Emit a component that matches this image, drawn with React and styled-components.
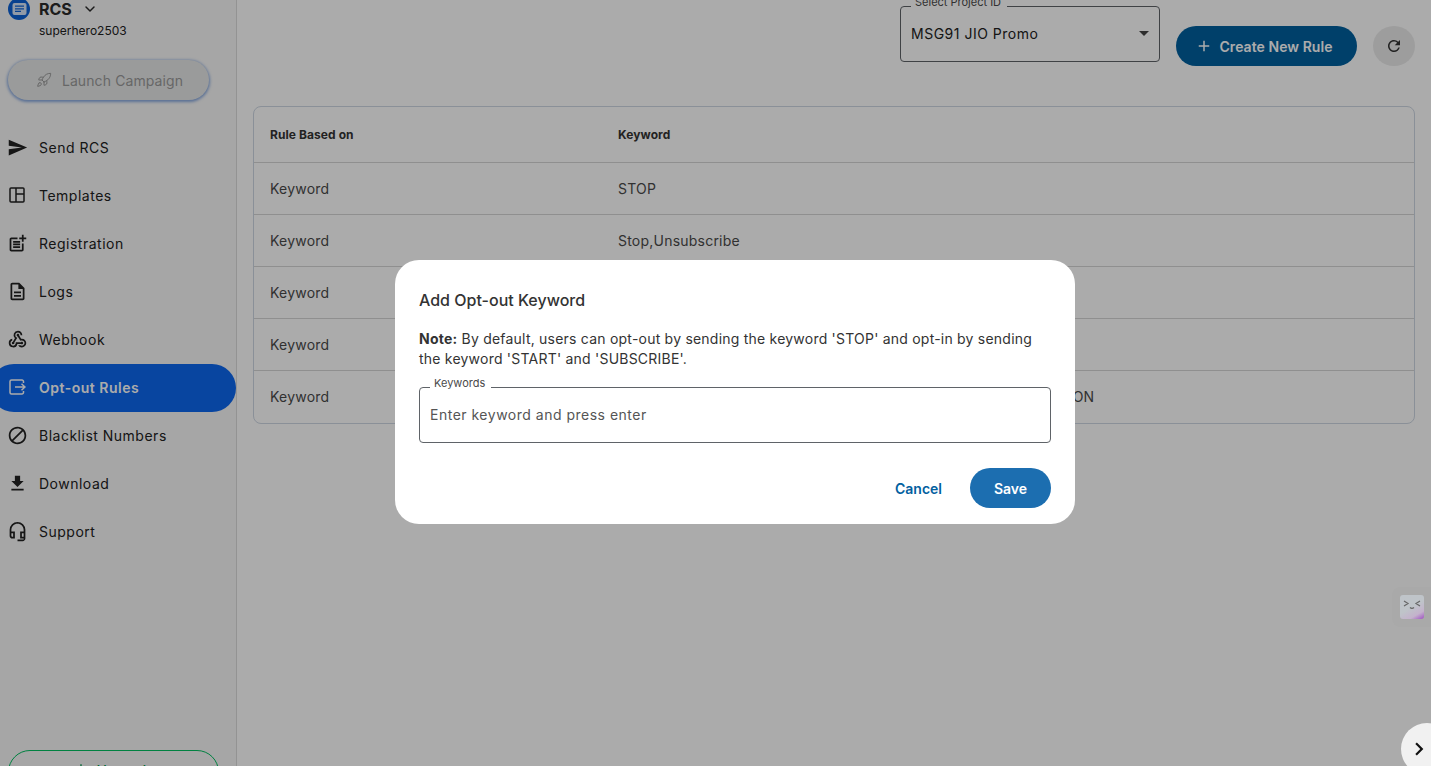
import React from "react";
import styled, { createGlobalStyle } from "styled-components";
import { ChevronDown, Rocket } from "lucide-react";
import {
  MdAdd,
  MdDownload,
  MdKeyboardArrowRight,
  MdOutlineBlock,
  MdOutlineDescription,
  MdOutlineHeadsetMic,
  MdOutlinePostAdd,
  MdOutlineWebhook,
  MdRefresh,
  MdSend,
} from "react-icons/md";

const GlobalStyle = createGlobalStyle`
  html, body { margin: 0; padding: 0; height: 100%; overflow: hidden; }
  body { font-family: Inter, "Noto Sans", sans-serif; background: #fff; color: #212121; }
  * { box-sizing: border-box; }
`;

const Page = styled.div`
  display: flex;
  height: 766px;
  overflow: hidden;
`;

const Sidebar = styled.aside`
  flex: 0 0 237px;
  height: 100%;
  background: #f8f8f8;
  border-right: 1px solid #dcdcdc;
  display: flex;
  flex-direction: column;
  overflow: hidden;
`;

const Brand = styled.div`
  display: grid;
  grid-template-columns: 22px auto 1fr;
  align-items: center;
  column-gap: 9px;
  padding-left: 8px;
  margin-top: -2px;
`;

const BrandLogo = styled.span`
  width: 22px;
  height: 22px;
  border-radius: 50%;
  background: #0c62d6;
  display: flex;
  align-items: center;
  justify-content: center;
`;

const BrandName = styled.div`
  font-size: 16px;
  font-weight: 700;
  line-height: 22px;
  color: #2b2b2b;
  display: flex;
  align-items: center;
  gap: 10px;
`;

const BrandUser = styled.div`
  grid-column: 2 / 4;
  font-size: 12px;
  line-height: 18px;
  color: #212121;
  margin-top: 2px;
`;

const LaunchButton = styled.button`
  margin: 20px 0 0 8px;
  width: 201px;
  height: 40px;
  flex: none;
  border: 0;
  border-radius: 20px;
  background: #e6e8e8;
  box-shadow: 0 1px 3px 1px rgba(40, 100, 200, 0.55);
  color: #9a9a9a;
  font: 400 14px Inter, sans-serif;
  letter-spacing: 0.1px;
  display: flex;
  align-items: center;
  justify-content: center;
  gap: 10px;
  padding: 0 0 0 2px;
`;

const Nav = styled.nav`
  margin-top: 24px;
  display: flex;
  flex-direction: column;
`;

const NavItem = styled.div`
  height: 48px;
  width: ${(p) => (p.$active ? "246px" : "100%")};
  margin-left: ${(p) => (p.$active ? "-10px" : "0")};
  padding: 0 0 2px ${(p) => (p.$active ? "18px" : "8px")};
  border-radius: ${(p) => (p.$active ? "24px" : "0")};
  background: ${(p) => (p.$active ? "#0c67ef" : "transparent")};
  color: ${(p) => (p.$active ? "#fff" : "#212121")};
  font-size: 14px;
  font-weight: ${(p) => (p.$active ? 600 : 400)};
  letter-spacing: 0.5px;
  display: flex;
  align-items: center;
  gap: 13px;
`;

const NavIcon = styled.span`
  width: 18px;
  height: 18px;
  flex: none;
  display: flex;
  align-items: center;
  justify-content: center;
  font-size: 21px;
  svg { flex: none; }
`;

const UpgradeButton = styled.div`
  margin: auto 0 -40px 8px;
  width: 211px;
  height: 56px;
  flex: none;
  border: 1px solid #00c060;
  border-radius: 22px;
  color: #00994d;
  font-size: 14px;
  font-weight: 500;
  display: flex;
  justify-content: center;
  gap: 8px;
  padding-top: 11px;
  svg { margin-top: -1px; }
`;

const Main = styled.main`
  flex: 1;
  min-width: 0;
  padding: 6px 16px 0;
  display: flex;
  flex-direction: column;
`;

const Toolbar = styled.div`
  display: flex;
  justify-content: flex-end;
  gap: 16px;
  height: 60px;
`;

const Outlined = styled.div`
  position: relative;
  border: 1px solid #5f6368;
  border-radius: 4px;
  height: 56px;
  display: flex;
  align-items: center;
  font-size: 14px;
  letter-spacing: 0.5px;
  padding: 0 10px 1px;
`;

const SelectBox = styled(Outlined)`
  width: 260px;
  flex: none;
  justify-content: space-between;
  color: #212121;
`;

const FieldLabel = styled.span`
  position: absolute;
  left: 10px;
  top: -10px;
  padding: 0 6px 0 4px;
  font-size: 11px;
  line-height: 11px;
  letter-spacing: 0;
  background: #fff;
  color: #4a4a4a;
  white-space: nowrap;
`;

const Caret = styled.span`
  width: 0;
  height: 0;
  border-left: 5px solid transparent;
  border-right: 5px solid transparent;
  border-top: 5px solid #444;
`;

const PrimaryButton = styled.button`
  align-self: flex-end;
  height: 40px;
  width: 181px;
  flex: none;
  border: 0;
  border-radius: 20px;
  background: #01609f;
  color: #fff;
  font: 600 14px Inter, sans-serif;
  letter-spacing: 0.05px;
  display: flex;
  align-items: center;
  justify-content: center;
  gap: 6px;
  padding: 0 5px 0 0;
`;

const RoundButton = styled.button`
  align-self: flex-end;
  width: 42px;
  height: 40px;
  flex: none;
  border: 0;
  border-radius: 50%;
  background: #ebebeb;
  color: #333;
  display: flex;
  align-items: center;
  justify-content: center;
  font-size: 18px;
  padding: 0;
`;

const TableWrap = styled.div`
  margin-top: 40px;
  border: 1px solid #ced7e3;
  border-radius: 8px;
  overflow: hidden;
`;

const RulesTable = styled.table`
  width: 100%;
  border-collapse: collapse;
  table-layout: fixed;
`;

const HeadCell = styled.th`
  height: 55px;
  padding: 0 16px;
  text-align: left;
  font-size: 12px;
  font-weight: 700;
  letter-spacing: 0.08px;
  color: #333;
  width: ${(p) => p.$width || "auto"};
`;

const Row = styled.tr`
  border-top: 1px solid #d6d6d6;
`;

const Cell = styled.td`
  height: ${(p) => (p.$last ? "53px" : "52px")};
  padding: 0 16px;
  font-size: 14px;
  letter-spacing: 0.22px;
  color: #4a4a4a;
  white-space: nowrap;
`;

const Overlay = styled.div`
  position: fixed;
  inset: 0;
  background: rgba(0, 0, 0, 0.33);
  display: flex;
  align-items: center;
  justify-content: center;
  padding: 18px 0 0 39px;
`;

const Dialog = styled.div`
  width: 680px;
  height: 264px;
  background: #fff;
  border-radius: 24px;
  padding: 30px 24px 16px;
`;

const DialogTitle = styled.h2`
  margin: 0;
  font-size: 16px;
  font-weight: 500;
  line-height: 20px;
  color: #333;
`;

const Note = styled.p`
  margin: 19px 0 0;
  font-size: 14px;
  line-height: 20px;
  letter-spacing: 0.22px;
  color: #333;
  b { font-weight: 700; }
`;

const KeywordField = styled(Outlined)`
  margin-top: 18px;
  color: #555;
`;

const DialogActions = styled.div`
  margin-top: 25px;
  display: flex;
  justify-content: flex-end;
  align-items: center;
  gap: 28px;
`;

const TextButton = styled.button`
  border: 0;
  background: none;
  padding: 0;
  color: #01609f;
  font: 600 14px Inter, sans-serif;
`;

const SaveButton = styled.button`
  width: 81px;
  height: 40px;
  border: 0;
  border-radius: 20px;
  background: #1c6eb0;
  color: #fff;
  font: 600 14px Inter, sans-serif;
`;

const FloatingWidget = styled.div`
  position: fixed;
  left: 1392px;
  top: 587px;
  width: 60px;
  height: 40px;
  border-radius: 8px 0 0 8px;
  background: rgba(0, 0, 0, 0.015);
  padding: 8px;
`;

const WidgetFace = styled.div`
  width: 24px;
  height: 24px;
  border-radius: 3px;
  background: linear-gradient(150deg, #bfc4c9 50%, #c4b2cc 78%, #a050c4 100%);
  display: flex;
  align-items: center;
  justify-content: center;
  padding-bottom: 3px;
`;

const Collapse = styled.div`
  position: fixed;
  left: 1401px;
  top: 723px;
  width: 52px;
  height: 52px;
  border-radius: 50%;
  background: #f1f1f1;
  color: #111;
  display: flex;
  align-items: center;
  padding-left: 5px;
  font-size: 26px;
`;

const OptOutIcon = () => (
  <svg width="18" height="18" viewBox="0 0 18 18" fill="none" stroke="currentColor" strokeWidth="1.5">
    <path d="M15.5 5V3.5a1.5 1.5 0 0 0-1.5-1.5H3.5A1.5 1.5 0 0 0 2 3.5v11A1.5 1.5 0 0 0 3.5 16H14a1.5 1.5 0 0 0 1.5-1.5V13" />
    <path d="M7 9h10M13.5 5.7 17 9l-3.5 3.3" />
  </svg>
);

const TemplatesIcon = () => (
  <svg width="18" height="18" viewBox="0 0 18 18" fill="none" stroke="currentColor" strokeWidth="1.5">
    <rect x="2" y="2" width="14" height="14" rx="1" />
    <path d="M8 2v14M8 8h8" />
  </svg>
);

const navItems = [
  { label: "Send RCS", icon: <MdSend /> },
  { label: "Templates", icon: <TemplatesIcon /> },
  { label: "Registration", icon: <MdOutlinePostAdd /> },
  { label: "Logs", icon: <MdOutlineDescription /> },
  { label: "Webhook", icon: <MdOutlineWebhook /> },
  { label: "Opt-out Rules", icon: <OptOutIcon />, active: true },
  { label: "Blacklist Numbers", icon: <MdOutlineBlock /> },
  { label: "Download", icon: <MdDownload /> },
  { label: "Support", icon: <MdOutlineHeadsetMic /> },
];

const rules = [
  "STOP",
  "Stop,Unsubscribe",
  "STOP",
  "STOP",
  "STOP,UNSUBSCRIBE,CANCEL,END,QUIT,OPTOUT,REMOVED, OPTION",
];

export default function App() {
  return (
    <>
      <GlobalStyle />
      <Page>
        <Sidebar>
          <Brand>
            <BrandLogo>
              <svg width="15" height="14" viewBox="0 0 15 14">
                <rect x="0.5" y="1" width="14" height="12" rx="2" fill="#d9e6fa" />
                <path d="M3 4.2h9M3 6.8h9M3 9.4h6" stroke="#0c62d6" strokeWidth="1.2" />
              </svg>
            </BrandLogo>
            <BrandName>
              RCS <ChevronDown size={16} strokeWidth={2.2} />
            </BrandName>
            <span />
            <span />
            <BrandUser>superhero2503</BrandUser>
          </Brand>
          <LaunchButton>
            <Rocket size={16} strokeWidth={1.5} />
            Launch Campaign
          </LaunchButton>
          <Nav>
            {navItems.map((item) => (
              <NavItem key={item.label} $active={item.active}>
                <NavIcon>{item.icon}</NavIcon>
                {item.label}
              </NavItem>
            ))}
          </Nav>
          <UpgradeButton>
            <MdAdd size={16} />
            Upgrade
          </UpgradeButton>
        </Sidebar>
        <Main>
          <Toolbar>
            <SelectBox>
              <FieldLabel>Select Project ID</FieldLabel>
              MSG91 JIO Promo
              <Caret />
            </SelectBox>
            <PrimaryButton>
              <MdAdd size={18} />
              Create New Rule
            </PrimaryButton>
            <RoundButton>
              <MdRefresh />
            </RoundButton>
          </Toolbar>
          <TableWrap>
            <RulesTable>
              <thead>
                <tr>
                  <HeadCell $width="348px">Rule Based on</HeadCell>
                  <HeadCell>Keyword</HeadCell>
                </tr>
              </thead>
              <tbody>
                {rules.map((keyword, i) => (
                  <Row key={i}>
                    <Cell $last={i === rules.length - 1}>Keyword</Cell>
                    <Cell $last={i === rules.length - 1}>{keyword}</Cell>
                  </Row>
                ))}
              </tbody>
            </RulesTable>
          </TableWrap>
        </Main>
      </Page>
      <Overlay>
        <Dialog>
          <DialogTitle>Add Opt-out Keyword</DialogTitle>
          <Note>
            <b>Note:</b> By default, users can opt-out by sending the keyword 'STOP' and opt-in by sending the keyword
            'START' and 'SUBSCRIBE'.
          </Note>
          <KeywordField>
            <FieldLabel>Keywords</FieldLabel>
            Enter keyword and press enter
          </KeywordField>
          <DialogActions>
            <TextButton>Cancel</TextButton>
            <SaveButton>Save</SaveButton>
          </DialogActions>
        </Dialog>
      </Overlay>
      <FloatingWidget>
        <WidgetFace>
          <svg width="18" height="11" viewBox="0 0 18 11" fill="none" stroke="#666" strokeWidth="1.2">
            <path d="M1 1 5 3.5 1 6M17 1 13 3.5 17 6M7 7.5q2 1.8 4 0" />
          </svg>
        </WidgetFace>
      </FloatingWidget>
      <Collapse>
        <MdKeyboardArrowRight />
      </Collapse>
    </>
  );
}
